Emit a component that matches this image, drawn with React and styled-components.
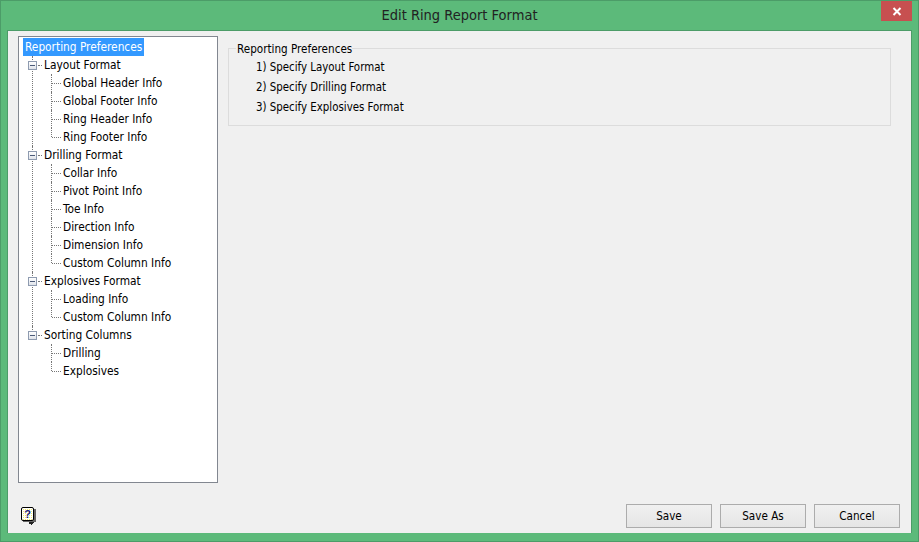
import styled, { createGlobalStyle } from 'styled-components'

const GlobalStyle = createGlobalStyle`
    html, body {
        margin: 0;
        padding: 0;
        background: #5cba7a;
    }
    * {
        box-sizing: border-box;
    }
`

const Window = styled.div`
    display: flex;
    flex-direction: column;
    width: 919px;
    height: 542px;
    background: #5cba7a;
    border: 1px solid #4c9c68;
    font-family: "DejaVu Sans Condensed", "DejaVu Sans", sans-serif;
    font-size: 11.6px;
    color: #000;
`
const TitleBar = styled.div`
    position: relative;
    flex: none;
    height: 29px;
    line-height: 29px;
    text-align: center;
    font-size: 14.5px;
    color: #222;
`
const CloseButton = styled.div`
    position: absolute;
    top: 0;
    right: 6px;
    width: 31px;
    height: 20px;
    display: flex;
    align-items: center;
    justify-content: center;
    background: #c75050;
`
const Client = styled.div`
    flex: 1;
    display: flex;
    flex-direction: column;
    margin: 0 6px 8px 6px;
    background: #f0f0f0;
    border: 1px solid #4c9c68;
    border-width: 1px 1px 0 1px;
    padding: 5px 11px 5px 10px;
    min-height: 0;
`
const Main = styled.div`
    flex: 1;
    display: flex;
    gap: 10px;
    min-height: 0;
`
const Tree = styled.div`
    flex: none;
    width: 200px;
    height: 447px;
    background: #fff;
    border: 1px solid #828790;
    padding: 1px 0 0 4px;
    font-size: 11.8px;
`
const RootRow = styled.div`
    height: 18px;
`
const Selected = styled.span`
    display: inline-block;
    height: 18px;
    line-height: 18px;
    padding: 0 2px;
    background: #3399ff;
    color: #fff;
`
const Branch = styled.div`
    position: relative;
    &::before {
        content: "";
        position: absolute;
        left: 9px;
        top: 0;
        height: ${(p) => (p.$last ? '6px' : '100%')};
        border-left: 1px dotted #777;
    }
`
const BranchRow = styled.div`
    position: relative;
    display: flex;
    align-items: center;
    height: 18px;
    line-height: 18px;
    padding-left: 5px;
`
const Expander = styled.span`
    position: relative;
    z-index: 1;
    flex: none;
    width: 9px;
    height: 9px;
    margin-right: 1px;
    background: linear-gradient(#fff, #dfe3ea);
    border: 1px solid #8e9bb0;
    &::after {
        content: "";
        position: absolute;
        left: 1px;
        top: 3px;
        width: 5px;
        height: 1px;
        background: #4a5a78;
    }
`
const Dash = styled.span`
    flex: none;
    width: 4px;
    margin-right: 2px;
    border-top: 1px dotted #777;
`
const Child = styled.div`
    position: relative;
    display: flex;
    align-items: center;
    height: 18px;
    line-height: 18px;
    padding-left: 28px;
    &::before {
        content: "";
        position: absolute;
        left: 28px;
        top: 0;
        height: ${(p) => (p.$last ? '9px' : '100%')};
        border-left: 1px dotted #777;
    }
`
const ChildDash = styled.span`
    flex: none;
    width: 9px;
    margin: 0 2px 0 1px;
    border-top: 1px dotted #777;
`
const Panel = styled.div`
    flex: 1;
    min-width: 0;
    padding-top: 4px;
`
const Group = styled.fieldset`
    width: 663px;
    height: 86px;
    margin: 0;
    padding: 0 0 0 27px;
    border: 1px solid #dcdcdc;
`
const GroupTitle = styled.legend`
    margin-left: -20px;
    padding: 2px 0 0 1px;
    line-height: 14px;
`
const Step = styled.div`
    height: 20px;
    line-height: 20px;
    font-size: 11.4px;
    &:first-of-type {
        margin-top: 1px;
    }
`
const Footer = styled.div`
    flex: none;
    display: flex;
    align-items: center;
    justify-content: space-between;
    height: 24px;
    padding-left: 3px;
`
const Buttons = styled.div`
    display: flex;
    gap: 8px;
`
const Button = styled.button`
    width: 86px;
    height: 24px;
    padding: 0;
    font: inherit;
    color: #000;
    background: linear-gradient(#f0f0f0, #e5e5e5);
    border: 1px solid #acacac;
`

const groups = [
    { name: 'Layout Format', items: ['Global Header Info', 'Global Footer Info', 'Ring Header Info', 'Ring Footer Info'] },
    { name: 'Drilling Format', items: ['Collar Info', 'Pivot Point Info', 'Toe Info', 'Direction Info', 'Dimension Info', 'Custom Column Info'] },
    { name: 'Explosives Format', items: ['Loading Info', 'Custom Column Info'] },
    { name: 'Sorting Columns', items: ['Drilling', 'Explosives'] },
]

const steps = ['1) Specify Layout Format', '2) Specify Drilling Format', '3) Specify Explosives Format']

function HelpIcon() {
    return (
        <svg width="15" height="18" viewBox="0 0 15 18">
            <defs>
                <pattern id="dots" width="2" height="2" patternUnits="userSpaceOnUse">
                    <rect width="2" height="2" fill="#fff" />
                    <rect width="1" height="1" fill="#f2ec6a" />
                </pattern>
            </defs>
            <rect x="2" y="2" width="13" height="13" fill="#666" />
            <path d="M8 15h5v1h-1v1h-1v1h-1v-1h-2z" fill="#222" />
            <rect x="0.5" y="0.5" width="12" height="13" rx="1.5" fill="url(#dots)" stroke="#000" />
            <text x="6.5" y="11" textAnchor="middle" fontFamily="Liberation Sans" fontWeight="700" fontSize="11" fill="#16167a">?</text>
        </svg>
    )
}

function App() {
    return (
        <>
            <GlobalStyle />
            <Window>
                <TitleBar>
                    Edit Ring Report Format
                    <CloseButton>
                        <svg width="10" height="9" viewBox="0 0 10 9">
                            <path d="M1.5 1l7 7M8.5 1l-7 7" stroke="#fff" strokeWidth="2" fill="none" />
                        </svg>
                    </CloseButton>
                </TitleBar>
                <Client>
                    <Main>
                        <Tree>
                            <RootRow>
                                <Selected>Reporting Preferences</Selected>
                            </RootRow>
                            {groups.map((g, i) => (
                                <Branch key={g.name} $last={i === groups.length - 1}>
                                    <BranchRow>
                                        <Expander />
                                        <Dash />
                                        {g.name}
                                    </BranchRow>
                                    {g.items.map((item, j) => (
                                        <Child key={item} $last={j === g.items.length - 1}>
                                            <ChildDash />
                                            {item}
                                        </Child>
                                    ))}
                                </Branch>
                            ))}
                        </Tree>
                        <Panel>
                            <Group>
                                <GroupTitle>Reporting Preferences</GroupTitle>
                                {steps.map((s) => (
                                    <Step key={s}>{s}</Step>
                                ))}
                            </Group>
                        </Panel>
                    </Main>
                    <Footer>
                        <HelpIcon />
                        <Buttons>
                            <Button>Save</Button>
                            <Button>Save As</Button>
                            <Button>Cancel</Button>
                        </Buttons>
                    </Footer>
                </Client>
            </Window>
        </>
    )
}

export default App
